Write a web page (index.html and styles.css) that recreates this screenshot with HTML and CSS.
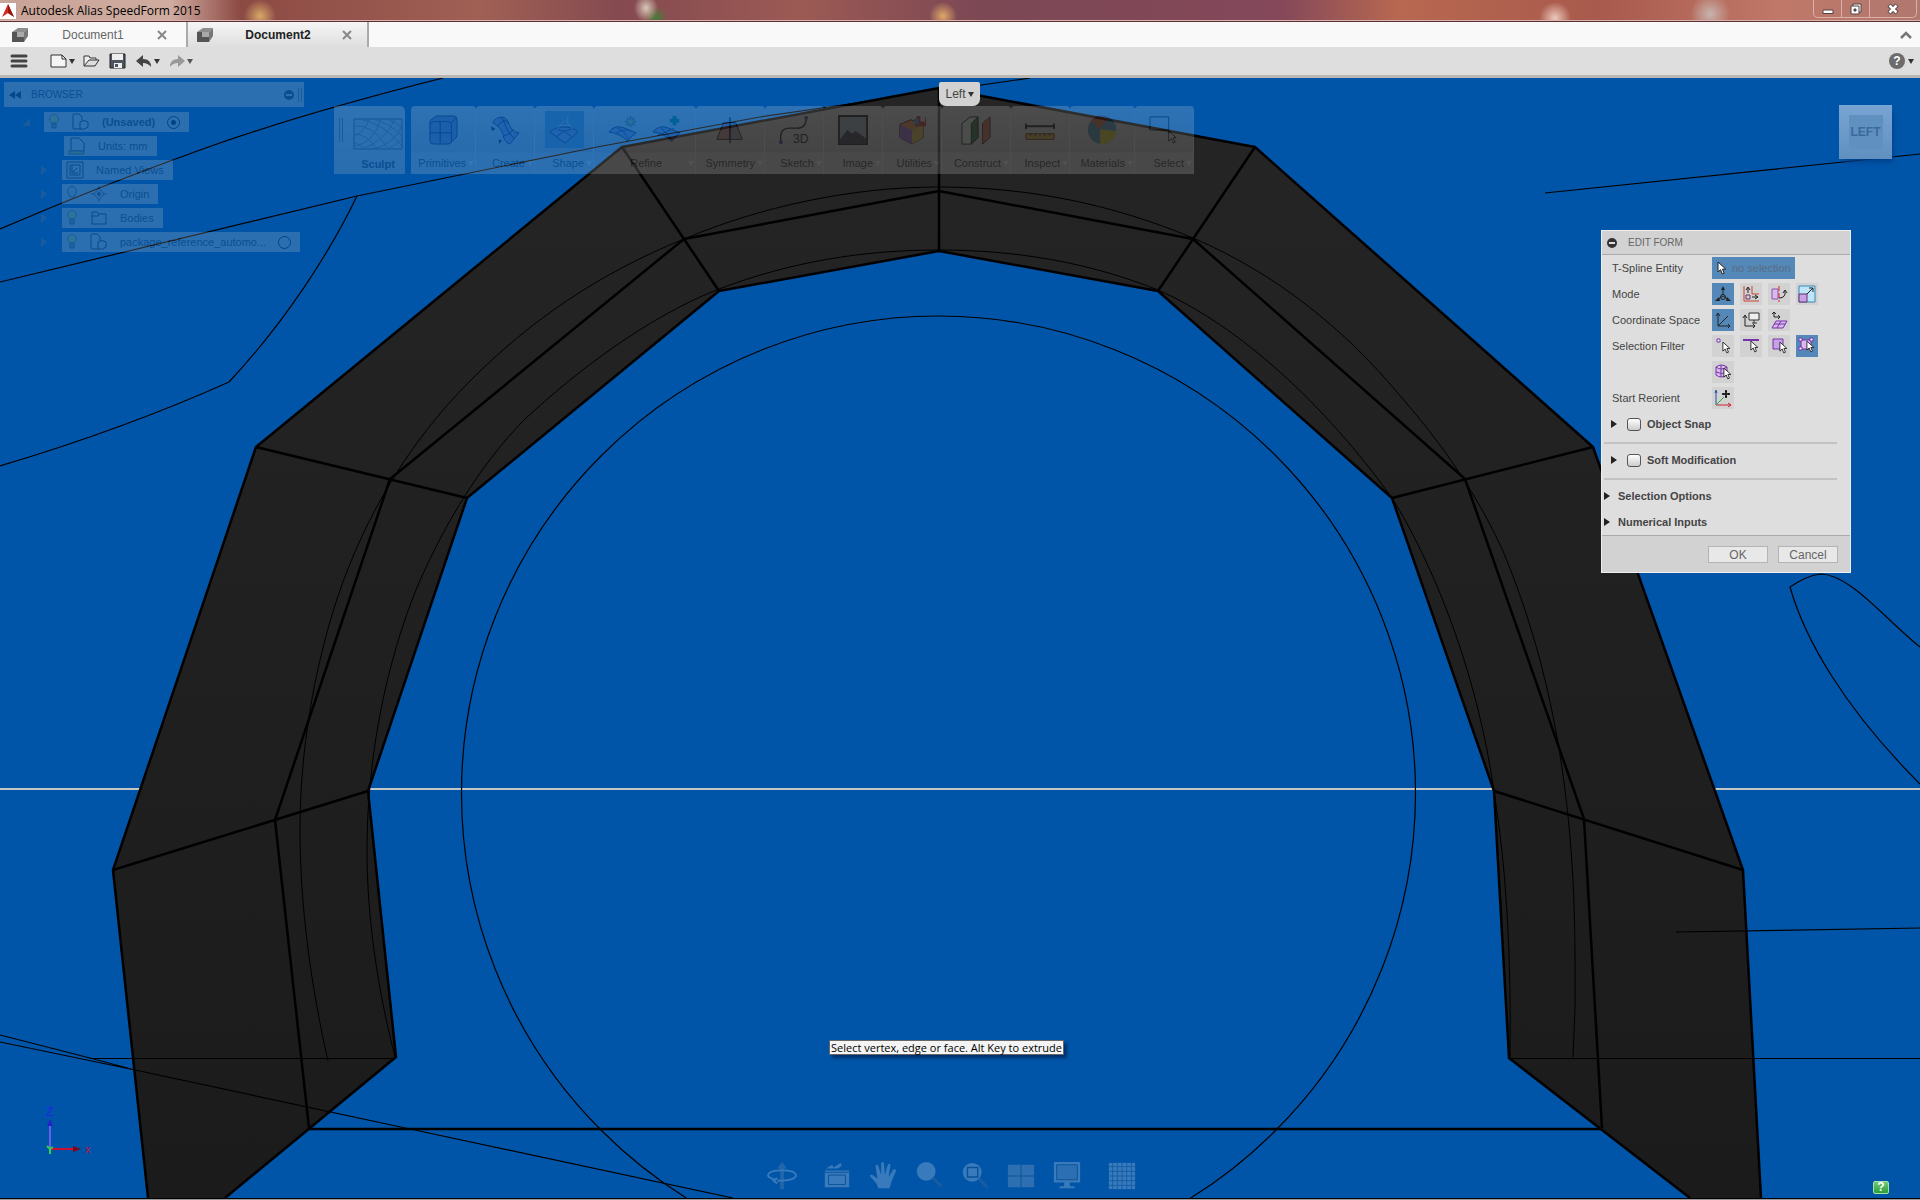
FILE: index.html
```html
<!DOCTYPE html>
<html lang="en">
  <head>
    <meta charset="UTF-8" />
    <meta name="viewport" content="width=device-width, initial-scale=1.0" />
    <title>Autodesk Alias SpeedForm 2015</title>
    <link rel="stylesheet" href="styles.css">
  </head>
  <body>
    <!-- Shared symbols -->
    <svg class="defs" aria-hidden="true">
      <symbol id="cursor" viewBox="0 0 10 14">
        <path d="M1 1v10l2.500-2.300 1.800 4.300 1.900-.8-1.800-4.100h3.400z" fill="#fff" stroke="#222" stroke-width="1" />
      </symbol>
      <symbol id="doc-cube" viewBox="0 0 18 17">
        <path d="M1 6l6-4h10l-4 4z" fill="#8d8d8d" />
        <path d="M1 6h5v5h7v5H1z" fill="#555" />
        <path d="M6 6h7v5H6z" fill="#a9a9a9" />
        <path d="M13 6l4-4v8l-4 6z" fill="#777" />
      </symbol>
      <symbol id="bulb" viewBox="0 0 12 16">
        <circle cx="6" cy="5" r="4.500" fill="#e8e860" stroke="#777" />
        <path d="M4 9h4v5H4z" fill="#999" stroke="#555" />
      </symbol>
      <symbol id="part" viewBox="0 0 18 18">
        <path d="M1 2q0-1 1-1h5l3 3v12H2q-1 0-1-1z" fill="#ddd" stroke="#222" />
        <path d="M8 9q4-3 8 0v5q-3 3-8 2z" fill="#ddd" stroke="#222" />
      </symbol>
    </svg>

    <header class="titlebar">
      <svg class="app-logo" viewBox="0 0 16 16"><path fill="#fff" d="M0 0h16v16H0z" /><path d="M8 1l6 13-6-4-6 4z" fill="#d22a1e" /><path d="M8 1l6 13-6-4z" fill="#98160f" /></svg>
      <span class="app-name">Autodesk Alias SpeedForm 2015</span>
      <div class="window-controls">
        <button aria-label="Minimize"><svg viewBox="0 0 14 12"><path d="M2 7h10v3.500H2z" fill="#fff" stroke="#544" /></svg></button>
        <button aria-label="Restore"><svg viewBox="0 0 14 12"><path d="M4 1h8v8H4z" fill="#fff" stroke="#544" /><path d="M2 3h8v8H2z" fill="#fff" stroke="#544" /><path d="M5 6h2v2H5z" fill="#544" stroke="#544" /></svg></button>
        <button class="close" aria-label="Close"><svg viewBox="0 0 14 12"><path d="M3 2l8 8M11 2l-8 8" stroke="#544" stroke-width="4.500" /><path d="M3.500 2.500l7 7M10.500 2.500l-7 7" stroke="#fff" stroke-width="2.500" /></svg></button>
      </div>
    </header>

    <nav class="tabs">
      <div class="tab">
        <svg class="tab-icon"><use href="#doc-cube" /></svg>
        <button class="tab-name">Document1</button>
        <button class="tab-close" aria-label="Close Document1"><svg viewBox="0 0 10 10"><path d="M1 1l8 8M9 1l-8 8" /></svg></button>
      </div>
      <div class="tab active">
        <svg class="tab-icon"><use href="#doc-cube" /></svg>
        <button class="tab-name">Document2</button>
        <button class="tab-close" aria-label="Close Document2"><svg viewBox="0 0 10 10"><path d="M1 1l8 8M9 1l-8 8" /></svg></button>
      </div>
      <button class="collapse" aria-label="Collapse"><svg viewBox="0 0 12 8"><path d="M1 7l5-5 5 5" fill="none" stroke="#777" stroke-width="2.500" /></svg></button>
    </nav>

    <div class="toolbar">
      <button class="menu-btn" aria-label="Menu"><svg width="18" height="16" viewBox="0 0 18 16"><path d="M2 3h14M2 8h14M2 13h14" stroke="#444" stroke-width="3" stroke-linecap="round" /></svg></button>
      <button class="with-arrow" aria-label="New"><svg width="18" height="16" viewBox="0 0 18 16"><path d="M1 2h11l4 4v8H1z" fill="#f4f4f4" stroke="#333" /><path d="M12 2v4h4" fill="none" stroke="#333" /></svg><i class="arrow"></i></button>
      <button aria-label="Open"><svg width="18" height="16" viewBox="0 0 18 16"><path d="M1 13V3h5l1 2h6v2" fill="#eee" stroke="#333" /><path d="M1 13l5-6h10l-4 6z" fill="#ddd" stroke="#333" /></svg></button>
      <button aria-label="Save"><svg width="18" height="16" viewBox="0 0 18 16"><path d="M1 1h15v14H1z" fill="#4e5560" stroke="#222" /><path d="M3 1h11v6H3z" fill="#eee" /><path d="M5 10h8v5H5z" fill="#eee" /><path d="M6 11h3v3H6z" fill="#4e5560" /></svg></button>
      <button class="with-arrow" aria-label="Undo"><svg width="18" height="16" viewBox="0 0 18 16"><path d="M1 8l7-6v4q8 0 8 8-3-4-8-4v4z" fill="#444" /></svg><i class="arrow"></i></button>
      <button class="with-arrow" aria-label="Redo" disabled><svg width="18" height="16" viewBox="0 0 18 16"><path d="M17 8l-7-6v4q-8 0-8 8 3-4 8-4v4z" fill="#888" /></svg><i class="arrow"></i></button>
      <button class="help with-arrow" aria-label="Help"><span class="help-dot">?</span><i class="arrow"></i></button>
    </div>

    <main class="viewport">
      <svg class="scene" viewBox="0 78 1920 1120" preserveAspectRatio="xMidYMin slice" aria-hidden="true">
        <defs>
          <linearGradient id="mesh" x1="0" y1="0" x2="0" y2="1">
            <stop offset="0" stop-color="#252525" />
            <stop offset="1" stop-color="#1b1b1b" />
          </linearGradient>
        </defs>
        <path d="M0 789H1920" stroke="#c4c6c4" stroke-width="2" />
        <!-- reference curves behind the mesh -->
        <g class="thin">
          <path d="M0 229Q100 186 200 150T443 78" />
          <path d="M0 282L357 196L597 147L760 117L1030 78" />
          <path d="M357 196C330 252 286 321 229 382C160 413 80 442 0 466" />
          <path d="M1545 193L1920 154" />
          <path d="M1920 647C1885 619 1850 574 1820 574Q1806 576 1790 587C1805 640 1845 709 1920 784" />
        </g>
        <path fill="url(#mesh)" d="M939 88L622 147L256 447L113 870L148 1198H225L396 1057L368 791L467 498L719 291L939 251L1158 291L1392 498L1494 791L1509 1058L1690 1198H1761L1743 870L1593 447L1255 147z" />
        <g class="edge">
          <path d="M148 1198L113 870L256 447L622 147L939 88L1255 147L1593 447L1743 870L1761 1198" />
          <path d="M309 1128L275 820L390 479L684 239L939 191L1193 239L1465 479L1584 819L1602 1128" />
          <path d="M225 1198L396 1057L368 791L467 498L719 291L939 251L1158 291L1392 498L1494 791L1509 1058L1690 1198" />
          <path d="M939 88V251M622 147L719 291M256 447L467 498M113 870L368 791M1255 147L1158 291M1593 447L1392 498M1743 870L1494 791M309 1129H1602" />
        </g>
        <g class="thin">
          <circle cx="938.500" cy="793" r="477" />
          <path d="M90 1058.500H396M1509 1058.500H1920" />
          <path d="M1676 932L1920 928" />
          <path d="M0 1035L90 1058L135 1070M0 1042L135 1070L410 1129L733 1198" />
        </g>
        <g class="faint">
          <path d="M328 1061C312 990 300 910 300 830C300 750 314 670 337 599C365 515 410 442 467 384C530 320 600 273 684 239C760 207 850 187 939 187C1028 187 1112 204 1193 238C1275 273 1344 328 1402 398C1456 460 1484 510 1503 551C1546 655 1575 780 1575 960Q1576 1010 1573 1057" />
          <path d="M395 1057C378 990 367 920 367 850C367 760 385 665 418 585C447 519 482 463 524 420C580 368 650 316 719 289C790 262 862 250 939 250C1015 250 1088 262 1158 290C1240 326 1325 405 1392 498C1432 562 1477 670 1494 792Q1512 900 1510 1057" />
        </g>
        <!-- axis triad -->
        <g fill="none" stroke-width="2">
          <path d="M50 1149V1125" stroke="#6a5cf0" />
          <path d="M50 1119l-3 7h6z" fill="#2222c8" stroke="none" />
          <path d="M50 1149H74" stroke="#d01030" />
          <path d="M81 1149l-8-3v6z" fill="#7a0818" stroke="none" />
          <path d="M47 1146l3 3 3-2M50 1149v5" stroke="#30d050" />
        </g>
        <text x="46" y="1116" class="axis-z">Z</text>
        <text x="85" y="1153" class="axis-x">x</text>
      </svg>

      <aside class="browser">
        <div class="browser-head">
          <svg width="12" height="8" viewBox="0 0 12 8"><path d="M6 0v8L0 4zM12 0v8L6 4z" fill="#111" /></svg>
          <span>BROWSER</span>
          <i class="minus"></i>
          <i class="grip"></i>
        </div>
        <ul class="tree">
          <li class="root"><i class="twist open"></i><div class="node"><svg class="bulb"><use href="#bulb" /></svg><svg class="node-icon"><use href="#part" /></svg><b>(Unsaved)</b><i class="radio on"></i></div></li>
          <li class="units"><div class="node"><svg class="node-icon" viewBox="0 0 18 18"><path d="M3 1h8l5 5v8H3z" fill="#ddd" stroke="#222" /><path d="M1 14h15v3H1z" fill="#cc5" stroke="#554" /></svg><span>Units: mm</span></div></li>
          <li><i class="twist"></i><div class="node"><svg class="node-icon" viewBox="0 0 18 18"><path d="M1 1h16v16H1zM4 4h10v10H4z" fill="none" stroke="#222" /><path d="M6 5v7h6M7 11l4-4" stroke="#222" fill="none" /></svg><span>Named Views</span></div></li>
          <li><i class="twist"></i><div class="node"><svg class="bulb" viewBox="0 0 12 16"><path d="M2 7a4.500 4.500 0 1 1 8 0L8 11H4z" fill="#ccc" stroke="#456" /></svg><svg class="node-icon" viewBox="0 0 18 18"><path d="M9 3l5 6-5 6-5-6z" fill="none" stroke="#644" /><path d="M9 6l2.500 3L9 12 6.500 9z" fill="#644" /><path d="M9 1v3M9 14v3M1 9h3M14 9h3" stroke="#644" /></svg><span>Origin</span></div></li>
          <li><i class="twist"></i><div class="node"><svg class="bulb"><use href="#bulb" /></svg><svg class="node-icon" viewBox="0 0 18 18"><path d="M2 15V3h5l2 2h7v10zM2 7h6l1-2" fill="none" stroke="#222" /></svg><span>Bodies</span></div></li>
          <li><i class="twist"></i><div class="node"><svg class="bulb"><use href="#bulb" /></svg><svg class="node-icon"><use href="#part" /></svg><span>package_reference_automo...</span><i class="radio"></i></div></li>
        </ul>
      </aside>

      <div class="ribbon">
        <button class="sculpt">
          <i class="grip"></i>
          <svg width="50" height="32" viewBox="0 0 50 32"><path d="M1 1h48v30H1z" fill="#d8d8d8" stroke="#555" /><path d="M1 8q20-2 34 23M1 16q14 0 22 15M1 24q6 2 9 7M6 1q25 4 43 27M20 1q18 5 29 17M34 1q9 3 15 9M1 28Q20 26 28 1M8 31Q32 24 42 1M20 31Q40 27 49 8M34 31q8-3 15-10M1 18Q12 14 16 1" fill="none" stroke="#888" /></svg>
          <b>Sculpt</b>
        </button>
        <div class="tools">
          <button class="tool md"><span class="pics"><svg viewBox="0 0 32 32"><path d="M2 8q0-3 3-4l4-3h18q4 0 4 4v16q0 3-3 5l-3 3q-1 2-4 2H6q-4 0-4-4z" fill="#88b" stroke="#113" /><path d="M2 10q2-3 5-3h14q4 0 4 4v18M13 7v23M2 19h23M25 8l5-5" fill="none" stroke="#113" /></svg></span><span class="label">Primitives<i class="arrow"></i></span></button>
          <button class="tool"><span class="pics"><svg viewBox="0 0 32 32"><path d="M3 8C7 1 16 0 19 7s5 11 12 12L21 31C13 28 15 20 12 16S7 11 3 8z" fill="#99c" stroke="#113" /><path d="M8 12c5-7 9-7 12-3M15 22c5-1 8-4 10-7M12 3c5 5 3 12 14 22" fill="none" stroke="#113" /><path d="M1 12l5 3-4 2zM9 26l4 1-3 4z" fill="#111" /></svg></span><span class="label">Create<i class="arrow"></i></span></button>
          <button class="tool selected"><span class="pics"><svg viewBox="0 0 32 32"><path d="M1 18q8-6 15-5 8-1 15 5L17 30z" fill="#99c" stroke="#224" /><path d="M8 23q7-7 16-8M9 15q8 2 15 8" fill="none" stroke="#224" /><path d="M9 15l4-6 4-3 4 3 4 6M12 11h10M20 1v9" fill="none" stroke="#dde" /></svg></span><span class="label">Shape<i class="arrow"></i></span></button>
          <button class="tool xl"><span class="pics"><svg viewBox="0 0 32 32"><path d="M1 18q6-7 14-5l15 6q-5 3-9 9Q14 20 1 18z" fill="#99c" stroke="#113" /><path d="M10 14q8 2 12 13M8 20q8-6 17-3" fill="none" stroke="#336" /><path d="M24 1v12M18 7h12M20 3l8 8M28 3l-8 8" stroke="#686" stroke-width="2" /><circle cx="24" cy="7" r="2.500" fill="#dd6" /></svg><svg viewBox="0 0 32 32"><path d="M1 18q6-7 14-5l15 6q-5 3-9 9Q14 20 1 18z" fill="#99c" stroke="#113" /><path d="M6 22L24 14M10 14l12 13" fill="none" stroke="#113" /><path d="M24 1v10M19 6h10" stroke="#185" stroke-width="4" /></svg></span><span class="label">Refine<i class="arrow"></i></span></button>
          <button class="tool lg"><span class="pics"><svg viewBox="0 0 32 32"><path d="M16 8v18H2L9 8z" fill="#c88" stroke="#111" /><path d="M16 8h6l7 18H16z" fill="#99a" stroke="#111" /><path d="M16 2v28" stroke="#111" stroke-width="1.500" /></svg></span><span class="label">Symmetry<i class="arrow"></i></span></button>
          <button class="tool"><span class="pics"><svg viewBox="0 0 32 32"><path d="M2 28Q0 14 11 14h8q10 1 10-12" fill="none" stroke="#111" stroke-width="1.500" /><circle cx="2" cy="29" r="2" fill="#33a" /><circle cx="29" cy="3" r="2" fill="#33a" /><text x="15" y="30" class="icon-text">3D</text></svg></span><span class="label">Sketch<i class="arrow"></i></span></button>
          <button class="tool"><span class="pics"><svg viewBox="0 0 32 32"><path d="M1 1h30v30H1z" fill="#9ab" stroke="#111" stroke-width="2" /><path d="M2 26l8-10 5 4 4-3 11 8v5H2z" fill="#334" /></svg></span><span class="label">Image<i class="arrow"></i></span></button>
          <button class="tool"><span class="pics"><svg viewBox="0 0 32 32"><path d="M3 10l12-5 13 6v13l-12 7-13-7z" fill="#e84" stroke="#311" /><path d="M3 10l13 6v15L3 24z" fill="#96c" /><path d="M16 16l12-5v13l-12 7z" fill="#db4" /><path d="M21 1h4v6h5V2h1v10H19z" fill="#b33" /><path d="M18 4h5v6h-5z" fill="#49c" /></svg></span><span class="label">Utilities<i class="arrow"></i></span></button>
          <button class="tool lg"><span class="pics"><svg viewBox="0 0 32 32"><path d="M1 9l9-7h8v22l-7 7H1z" fill="#ded" stroke="#111" /><path d="M11 9l7-7v22l-7 7z" fill="#2a6a3a" stroke="#111" /><path d="M23 9l8-7v22l-8 7z" fill="#c64" stroke="#311" /></svg></span><span class="label">Construct<i class="arrow"></i></span></button>
          <button class="tool"><span class="pics"><svg viewBox="0 0 32 32"><path d="M1 12h30M1 9v6M31 9v6" stroke="#111" stroke-width="2" /><path d="M1 20h30v6H1z" fill="#da3" stroke="#421" /><path d="M6 20v3M11 20v3M16 20v3M21 20v3M26 20v3" stroke="#421" /></svg></span><span class="label">Inspect<i class="arrow"></i></span></button>
          <button class="tool md"><span class="pics"><svg viewBox="0 0 32 32"><circle cx="16" cy="16" r="15" fill="#48a" /><path d="M14 15L4 6A15 15 0 0 1 24 3z" fill="#c64" /><path d="M14 15L24 3a15 15 0 0 1 7 14z" fill="#49c" /><path d="M14 15l17 2a15 15 0 0 1-17 14z" fill="#dc2" /></svg></span><span class="label">Materials<i class="arrow"></i></span></button>
          <button class="tool"><span class="pics"><svg viewBox="0 0 32 32"><path d="M1 2h20v14H1z" fill="none" stroke="#111" /><path d="M21 17v11l3-3 2 5 2-1-2-5h3z" fill="#ddd" stroke="#111" /></svg></span><span class="label">Select<i class="arrow"></i></span></button>
        </div>
      </div>

      <button class="view-name">Left<i class="arrow"></i></button>
      <button class="viewcube"><span>LEFT</span></button>

      <section class="edit-form">
        <h2><i class="minus"></i>EDIT FORM</h2>
        <div class="form-body">
          <div class="row"><span class="name">T-Spline Entity</span><button class="entity"><svg width="10" height="14"><use href="#cursor" /></svg>no selection</button></div>
          <div class="row">
            <span class="name">Mode</span>
            <button class="pick on" aria-label="Multi"><svg viewBox="0 0 18 18"><path d="M9 10V3M9 11l-6 4M9 11l6 4" stroke="#222" /><path d="M7 5l2-4 2 4zM1 16l4-4 1 4zM17 16l-4-4-1 4z" fill="#222" /><circle cx="9" cy="12" r="2.500" fill="none" stroke="#222" /></svg></button>
            <button class="pick" aria-label="Translate"><svg viewBox="0 0 18 18"><path d="M2 1v15h15M10 1v8h7" fill="none" stroke="#c43" /><path d="M4 10h4v4H4z" fill="none" stroke="#636" /><path d="M6 8V3M4 5l2-3 2 3M10 12h6M13 10l3 2-3 2" fill="none" stroke="#222" /></svg></button>
            <button class="pick" aria-label="Rotate"><svg viewBox="0 0 18 18"><path d="M2 4h6v10H2z" fill="#d9b8f0" stroke="#85a" /><path d="M9 1v16" stroke="#d22" stroke-dasharray="5 2" /><path d="M9 13q7 0 6-7M13 8l2-3 2 3" fill="none" stroke="#222" /></svg></button>
            <button class="pick" aria-label="Scale"><svg viewBox="0 0 18 18"><path d="M1 1h16v16H1z" fill="#bfe6f8" stroke="#378ab8" /><path d="M1 9h8v8H1z" fill="#c8a0e8" stroke="#636" /><path d="M9 9l6-6M11 3h4v4" fill="none" stroke="#222" /></svg></button>
          </div>
          <div class="row">
            <span class="name">Coordinate Space</span>
            <button class="pick on" aria-label="World"><svg viewBox="0 0 18 18"><path d="M4 3v12h12M4 15L14 5M2 5l2-3 2 3M14 13l2 2-2 2" fill="none" stroke="#222" /></svg></button>
            <button class="pick" aria-label="View"><svg viewBox="0 0 18 18"><path d="M3 5v10h10M1 7l2-3 2 3M11 13l2 2-2 2" fill="none" stroke="#222" /><path d="M7 2h10v7H7z" fill="#eee" stroke="#333" /><path d="M12 9v3M10 12h5" stroke="#333" /></svg></button>
            <button class="pick" aria-label="Local"><svg viewBox="0 0 18 18"><path d="M4 1v5h6M2 3l2-2 2 2M8 4l2 2-2 2" fill="none" stroke="#222" /><path d="M6 10h11l-4 7H2zM11 10l-4 7M4 13h11" fill="#d9b8f0" stroke="#73a" /></svg></button>
          </div>
          <div class="row">
            <span class="name">Selection Filter</span>
            <button class="pick" aria-label="Vertex"><svg viewBox="0 0 18 18"><path d="M3 2h3v3H3z" fill="#fff" stroke="#73a" /><use href="#cursor" x="8" y="4" width="9" height="13" /></svg></button>
            <button class="pick" aria-label="Edge"><svg viewBox="0 0 18 18"><path d="M1 3h16" stroke="#73a" stroke-width="2" /><use href="#cursor" x="8" y="3" width="9" height="13" /></svg></button>
            <button class="pick" aria-label="Face"><svg viewBox="0 0 18 18"><path d="M3 2h10v10H3z" fill="#c8a0e8" stroke="#73a" /><use href="#cursor" x="9" y="4" width="9" height="13" /></svg></button>
            <button class="pick on" aria-label="All"><svg viewBox="0 0 18 18"><path d="M3 3h10v9H3z" fill="#d9b8f0" stroke="#73a" /><path d="M1 1h3v3H1zM12 1h3v3h-3zM1 10h3v3H1z" fill="#fff" stroke="#73a" /><use href="#cursor" x="8" y="3" width="9" height="13" /></svg></button>
          </div>
          <div class="row">
            <span class="name"></span>
            <button class="pick" aria-label="Body"><svg viewBox="0 0 18 18"><path d="M2 4q5-4 11 0v8q-6 4-11 0zM2 4q5 4 11 0M7 2v12M2 9q6 3 11 0" fill="#d9b8f0" stroke="#73a" /><use href="#cursor" x="9" y="4" width="9" height="13" /></svg></button>
          </div>
          <div class="row">
            <span class="name">Start Reorient</span>
            <button class="pick" aria-label="Start Reorient"><svg viewBox="0 0 18 18"><path d="M2 16V2M1 4l1-3 1 3" fill="none" stroke="#25a" /><path d="M2 16h15M14 14l3 2-3 2" fill="none" stroke="#c23" /><path d="M2 16L10 8" stroke="#3a3" /><path d="M12 1v8M8 5h8M11 2.500h2M11 7.500h2M9.500 4v2M14.500 4v2" stroke="#111" stroke-width="1.500" /></svg></button>
          </div>
          <div class="option">
            <button class="expand" aria-label="Expand Object Snap"></button>
            <input type="checkbox" id="objectSnap" />
            <label for="objectSnap">Object Snap</label>
          </div>
          <hr />
          <div class="option">
            <button class="expand" aria-label="Expand Soft Modification"></button>
            <input type="checkbox" id="softMod" />
            <label for="softMod">Soft Modification</label>
          </div>
          <hr />
          <button class="section"><i class="expand"></i>Selection Options</button>
          <button class="section"><i class="expand"></i>Numerical Inputs</button>
        </div>
        <div class="form-foot">
          <button>OK</button>
          <button>Cancel</button>
        </div>
      </section>

      <div class="tooltip">Select vertex, edge or face. Alt Key to extrude</div>

      <div class="navbar">
        <button aria-label="Orbit"><svg viewBox="0 0 32 32"><path d="M16 1l5 7h-3v22h-4V8h-3z" fill="#9ab" /><path d="M9 20q-8-2-8-5 1-5 15-5t15 5q0 6-20 6M11 18l-4 3 4 3" fill="none" stroke="#fff" stroke-width="2" /></svg></button>
        <button class="spaced" aria-label="Look at"><svg viewBox="0 0 32 32"><path d="M3 10h26v18H3zM4 8l7-4 1 3 8-5 1 3-4 3z" fill="#fff" /><path d="M3 12h26M7 15h18v10H7z" fill="none" stroke="#246" /></svg></button>
        <button aria-label="Pan"><svg viewBox="0 0 32 32"><path d="M11 29l-2-5-7-8q0-2 3-1l5 4L8 5q1-2 3 0l3 10V2q2-2 3 0l1 13 3-11q2-2 3 0l-2 13 5-8q2-1 3 1l-5 12-2 7z" fill="#fff" /></svg></button>
        <button aria-label="Zoom"><svg viewBox="0 0 32 32"><circle cx="13" cy="11" r="10" fill="#fff" /><path d="M20 18l9 9" stroke="#778" stroke-width="3" /></svg></button>
        <button aria-label="Fit"><svg viewBox="0 0 32 32"><circle cx="13" cy="12" r="10" fill="#fff" /><path d="M8 7h11v10H8z" fill="none" stroke="#246" stroke-width="1.500" /><path d="M20 19l9 9" stroke="#778" stroke-width="3" /></svg></button>
        <button aria-label="Views"><svg viewBox="0 0 32 32"><path d="M2 4h28v24H2z" fill="#ccc" /><path d="M16 4v24M2 16h28" stroke="#246" /></svg></button>
        <button aria-label="Display"><svg viewBox="0 0 32 32"><path d="M2 1h28v22H19v4h5v2H8v-2h5v-4H2z" fill="#fff" /><path d="M5 4h22v16H5z" fill="#ccd" stroke="#246" /></svg></button>
        <button class="spaced" aria-label="Grid"><svg viewBox="0 0 32 32"><path d="M2 2h28v28H2z" fill="#fff" /><path d="M6 2v28M11 2v28M16 2v28M21 2v28M26 2v28M2 6h28M2 11h28M2 16h28M2 21h28M2 26h28" stroke="#579" /></svg></button>
      </div>
      <button class="tip-button" aria-label="Tips">?</button>
    </main>
  </body>
</html>
```

FILE: styles.css
```css
* {
  box-sizing: border-box;
}

body {
  margin: 0;
  min-height: 100vh;
  display: flex;
  flex-direction: column;
  font-family: "Liberation Sans", Arial, sans-serif;
  font-size: 12px;
  color: #444;
  background: #999;
}

button {
  font: inherit;
  color: inherit;
  background: none;
  border: 0;
  padding: 0;
  cursor: pointer;
}

svg {
  display: block;
  flex: none;
}

.defs {
  position: absolute;
  width: 0;
  height: 0;
}

.arrow {
  border: 3px solid transparent;
  border-top: 5px solid #333;
  border-bottom: 0;
}

/* Title bar */
.titlebar {
  display: flex;
  align-items: center;
  height: 22px;
  border-bottom: 1px solid #5c3034;
  box-shadow: inset 0 -1px #d8b4ac;
  background:
    radial-gradient(ellipse 16px 16px at 260px 16px, #d8a868, transparent),
    radial-gradient(ellipse 12px 14px at 646px 8px, #d8c8b8, transparent),
    radial-gradient(ellipse 12px 12px at 656px 18px, #4a7a38, transparent),
    radial-gradient(ellipse 14px 14px at 943px 16px, #e0a868, transparent),
    radial-gradient(ellipse 16px 16px at 1555px 18px, #ecc8bc, transparent),
    radial-gradient(ellipse 20px 20px at 1710px 14px, #c8b4b0, transparent),
    linear-gradient(90deg, #c8a498 0, #d0aca0 170px, #8c4a44 240px, #a06054 480px, #844a50 620px, #9c5a54 800px, #7c4854 980px, #84485a 1280px, #b86850 1400px, #a85a4c 1600px, #c07868 1780px, #b07870 100%);
}

.app-logo {
  width: 16px;
  height: 16px;
}

.app-name {
  padding-left: 5px;
  font-family: "Open Sans", sans-serif;
  font-size: 12px;
  color: #000;
}

.window-controls {
  display: flex;
  align-self: flex-start;
  margin-left: auto;
  margin-right: 3px;
  border: 1px solid #dcb0a8;
  border-top: 0;
  border-radius: 0 0 5px 5px;
}

.window-controls button {
  display: flex;
  align-items: center;
  justify-content: center;
  width: 28px;
  height: 17px;
  border-right: 1px solid #dcb0a8;
}

.window-controls .close {
  width: 46px;
  border: 0;
}

.window-controls svg {
  width: 14px;
  height: 12px;
}

/* Document tabs */
.tabs {
  display: flex;
  height: 25px;
  background: #f9f9f9;
}

.tab {
  display: flex;
  align-items: center;
  justify-content: space-between;
  width: 188px;
  padding: 0 19px 0 11px;
  border-right: 2px solid #aaa;
  color: #666;
}

.tab.active {
  width: 181px;
  padding: 0 15px 0 8px;
  background: linear-gradient(#f6f6f6, #dedede);
  color: #222;
  font-weight: bold;
}

.tab-icon {
  width: 18px;
  height: 17px;
}

.tab-close svg {
  width: 10px;
  height: 10px;
  stroke: #888;
  stroke-width: 2;
}

.collapse {
  margin-left: auto;
  padding: 0 8px;
}

.collapse svg {
  width: 12px;
  height: 8px;
}

/* Toolbar */
.toolbar {
  display: flex;
  align-items: center;
  gap: 8px;
  height: 31px;
  padding: 0 6px 0 10px;
  background: #dedede;
  border-bottom: 3px solid #bab6b2;
}

.menu-btn {
  margin-right: 14px;
}

.with-arrow {
  display: flex;
  align-items: center;
  gap: 1px;
}

.with-arrow:disabled {
  opacity: 0.8;
}

.help {
  margin-left: auto;
  gap: 3px;
}

.help-dot {
  width: 16px;
  height: 16px;
  border-radius: 50%;
  background: #6c6c6c;
  color: #fff;
  font-weight: bold;
  line-height: 16px;
}

/* Viewport */
.viewport {
  position: relative;
  flex: 1;
  margin-bottom: 1px;
  border-bottom: 1px solid #000;
  background: #0055a8;
  overflow: hidden;
}

.scene {
  position: absolute;
  width: 100%;
  height: 100%;
}

.thin,
.faint,
.edge {
  fill: none;
  stroke: #000;
}

.thin {
  stroke-width: 1.2;
}

.edge {
  stroke-width: 2.5;
  stroke-linejoin: round;
}

.axis-z {
  font-size: 12px;
  fill: #2424f0;
}

.axis-x {
  font-size: 11px;
  fill: #c01040;
}

/* Browser tree */
.browser {
  position: absolute;
  top: 4px;
  left: 4px;
  width: 300px;
  opacity: 0.2;
  color: #333;
  font-size: 11px;
  white-space: nowrap;
}

.browser-head {
  display: flex;
  align-items: center;
  gap: 10px;
  height: 25px;
  padding: 0 2px 0 5px;
  background: #d8d8d8;
  font-size: 10px;
}

.minus {
  width: 10px;
  height: 10px;
  border-radius: 50%;
  background: linear-gradient(#ddd, #ddd) center / 6px 2px no-repeat #333;
}

.browser-head .minus {
  margin-left: auto;
}

.grip {
  width: 4px;
  height: 14px;
  border: solid #777;
  border-width: 0 1px;
}

.browser-head .grip {
  margin-left: -6px;
}

.tree {
  margin: 5px 0 0;
  padding: 0;
  list-style: none;
}

.tree li {
  display: flex;
  align-items: center;
  height: 20px;
  margin-bottom: 4px;
  padding-left: 37px;
}

.tree .root {
  padding-left: 18px;
}

.tree .units {
  padding-left: 60px;
}

.twist {
  flex: none;
  margin-right: 15px;
  border: solid transparent;
  border-width: 5px 0 5px 6px;
  border-left-color: #777;
}

.twist.open {
  border-width: 0 0 8px 8px;
  border-color: transparent transparent #777;
  margin-right: 14px;
}

.node {
  display: flex;
  align-items: center;
  gap: 12px;
  height: 20px;
  padding: 0 9px 0 4px;
  background: #d8d8d8;
}

.bulb {
  width: 12px;
  height: 16px;
}

.node-icon {
  width: 18px;
  height: 18px;
}

.radio {
  flex: none;
  width: 13px;
  height: 13px;
  border: 1px solid #000;
  border-radius: 50%;
}

.radio.on {
  background: radial-gradient(#000 2px, transparent 3px);
}

/* Ribbon */
.ribbon {
  position: absolute;
  top: 28px;
  left: 334px;
  display: flex;
  gap: 6px;
  height: 68px;
  opacity: 0.2;
  color: #333;
  font-size: 11px;
}

.sculpt {
  display: grid;
  grid-template-columns: 14px 50px;
  grid-template-rows: 40px 18px;
  align-items: end;
  width: 71px;
  padding: 6px 4px 0 5px;
  background: linear-gradient(#e8e8e8, #d0d0d0);
  border-radius: 0 5px 0 0;
}

.sculpt .grip {
  height: 24px;
  margin-bottom: 10px;
}

.sculpt svg {
  margin-bottom: 2px;
}

.sculpt b {
  grid-column: 2;
}

.tools {
  display: flex;
}

.tool {
  display: flex;
  flex-direction: column;
  width: 59px;
  padding-top: 5px;
  background: linear-gradient(#e8e8e8, #c4c4c4 46px, #d8d8d8 47px);
  border-right: 1px solid #eee;
  border-radius: 4px 4px 0 0;
}

.tool.md {
  width: 65px;
}

.tool.lg {
  width: 69px;
}

.tool.xl {
  width: 102px;
}

.pics {
  display: flex;
  flex: none;
  align-self: center;
  justify-content: center;
  align-items: center;
  gap: 14px;
  width: 39px;
  height: 37px;
}

.pics svg {
  width: 30px;
  height: 30px;
}

.selected .pics {
  background: #78a0c0;
}

.label {
  display: flex;
  align-items: center;
  justify-content: flex-end;
  gap: 2px;
  height: 26px;
  padding: 4px 1px 0 0;
}

.tool.xl .label {
  gap: 26px;
}

.tool .arrow {
  border-top-color: #fff;
}

.icon-text {
  font-size: 13px;
  fill: #111;
}

/* View widgets */
.view-name {
  position: absolute;
  top: 4px;
  left: 939px;
  display: flex;
  align-items: center;
  justify-content: center;
  gap: 2px;
  width: 41px;
  height: 24px;
  background: #d2d2d2;
  border-radius: 2px 2px 7px 7px;
}

.viewcube {
  position: absolute;
  top: 27px;
  right: 28px;
  display: flex;
  align-items: center;
  justify-content: center;
  width: 53px;
  height: 54px;
  background: linear-gradient(#78a4d2, #6090c0);
  box-shadow: 3px 5px 5px -2px #00408c;
}

.viewcube span {
  width: 34px;
  height: 34px;
  background: #6090c0;
  color: #3a699c;
  font-weight: bold;
  line-height: 34px;
}

/* Edit form dialog */
.edit-form {
  position: absolute;
  top: 152px;
  right: 69px;
  width: 250px;
  background: #dedede;
  border: 1px solid #eee;
}

.edit-form h2 {
  display: flex;
  align-items: center;
  gap: 11px;
  height: 24px;
  margin: 0;
  padding-left: 5px;
  background: #d2d2d2;
  border-bottom: 1px solid #aaa;
  font-size: 10px;
  font-weight: normal;
  color: #666;
}

.form-body {
  font-size: 11px;
}

.row {
  display: flex;
  align-items: center;
  gap: 6px;
  height: 26px;
  padding-left: 10px;
}

.row .name {
  width: 94px;
  white-space: nowrap;
}

.entity {
  display: flex;
  align-items: center;
  gap: 5px;
  height: 22px;
  padding: 0 4px 0 5px;
  background: #5488b8;
  color: #596d84;
}

.pick {
  display: flex;
  align-items: center;
  justify-content: center;
  width: 22px;
  height: 22px;
  background: #d2d2d2;
}

.pick.on {
  background: #5488b8;
}

.pick svg {
  width: 18px;
  height: 18px;
}

.option,
.section {
  display: flex;
  align-items: center;
  height: 26px;
  font-weight: bold;
}

.option {
  gap: 10px;
  padding-left: 9px;
}

.option input {
  appearance: none;
  width: 14px;
  height: 13px;
  margin: 0;
  border: 1px solid #555;
  border-radius: 3px;
  background: linear-gradient(#fff, #ccc);
}

.option label {
  margin-left: -4px;
}

.section {
  gap: 8px;
  padding-left: 2px;
}

.expand {
  width: 6px;
  height: 8px;
  border: solid transparent;
  border-width: 4px 0 4px 6px;
  border-left-color: #222;
}

.edit-form hr {
  height: 2px;
  margin: 5px 13px 3px 2px;
  border: 0;
  background: #c2c2c2;
}

.form-foot {
  display: flex;
  justify-content: flex-end;
  gap: 10px;
  padding: 10px 12px 9px;
  background: #d2d2d2;
  border-top: 1px solid #aaa;
}

.form-foot button {
  width: 60px;
  height: 17px;
  background: #e8e8e8;
  border: 1px solid #b4b4b4;
  color: #666;
  font-size: 12px;
  line-height: 14px;
}

/* Prompt next to the pointer */
.tooltip {
  position: absolute;
  top: 962px;
  left: 829px;
  height: 15px;
  padding: 0 1px;
  background: #f4f4f4;
  border: 1px solid #666;
  box-shadow: 3px 3px 3px #00306c;
  color: #000;
  font-family: "Open Sans", sans-serif;
  font-size: 11px;
  line-height: 13px;
  white-space: nowrap;
}

/* Navigation bar */
.navbar {
  position: absolute;
  bottom: 7px;
  left: 50%;
  display: flex;
  width: 386px;
  margin-left: -201px;
  opacity: 0.22;
}

.navbar button {
  width: 46px;
  padding: 0 8px;
}

.navbar .spaced {
  margin-left: 9px;
}

.navbar svg {
  width: 30px;
  height: 30px;
}

.tip-button {
  position: absolute;
  right: 31px;
  bottom: 4px;
  width: 16px;
  height: 13px;
  border: 1px solid #a8e0a8;
  border-radius: 2px;
  background: linear-gradient(#70c878, #28a038);
  color: #fff;
  font-weight: bold;
  line-height: 11px;
}
```
